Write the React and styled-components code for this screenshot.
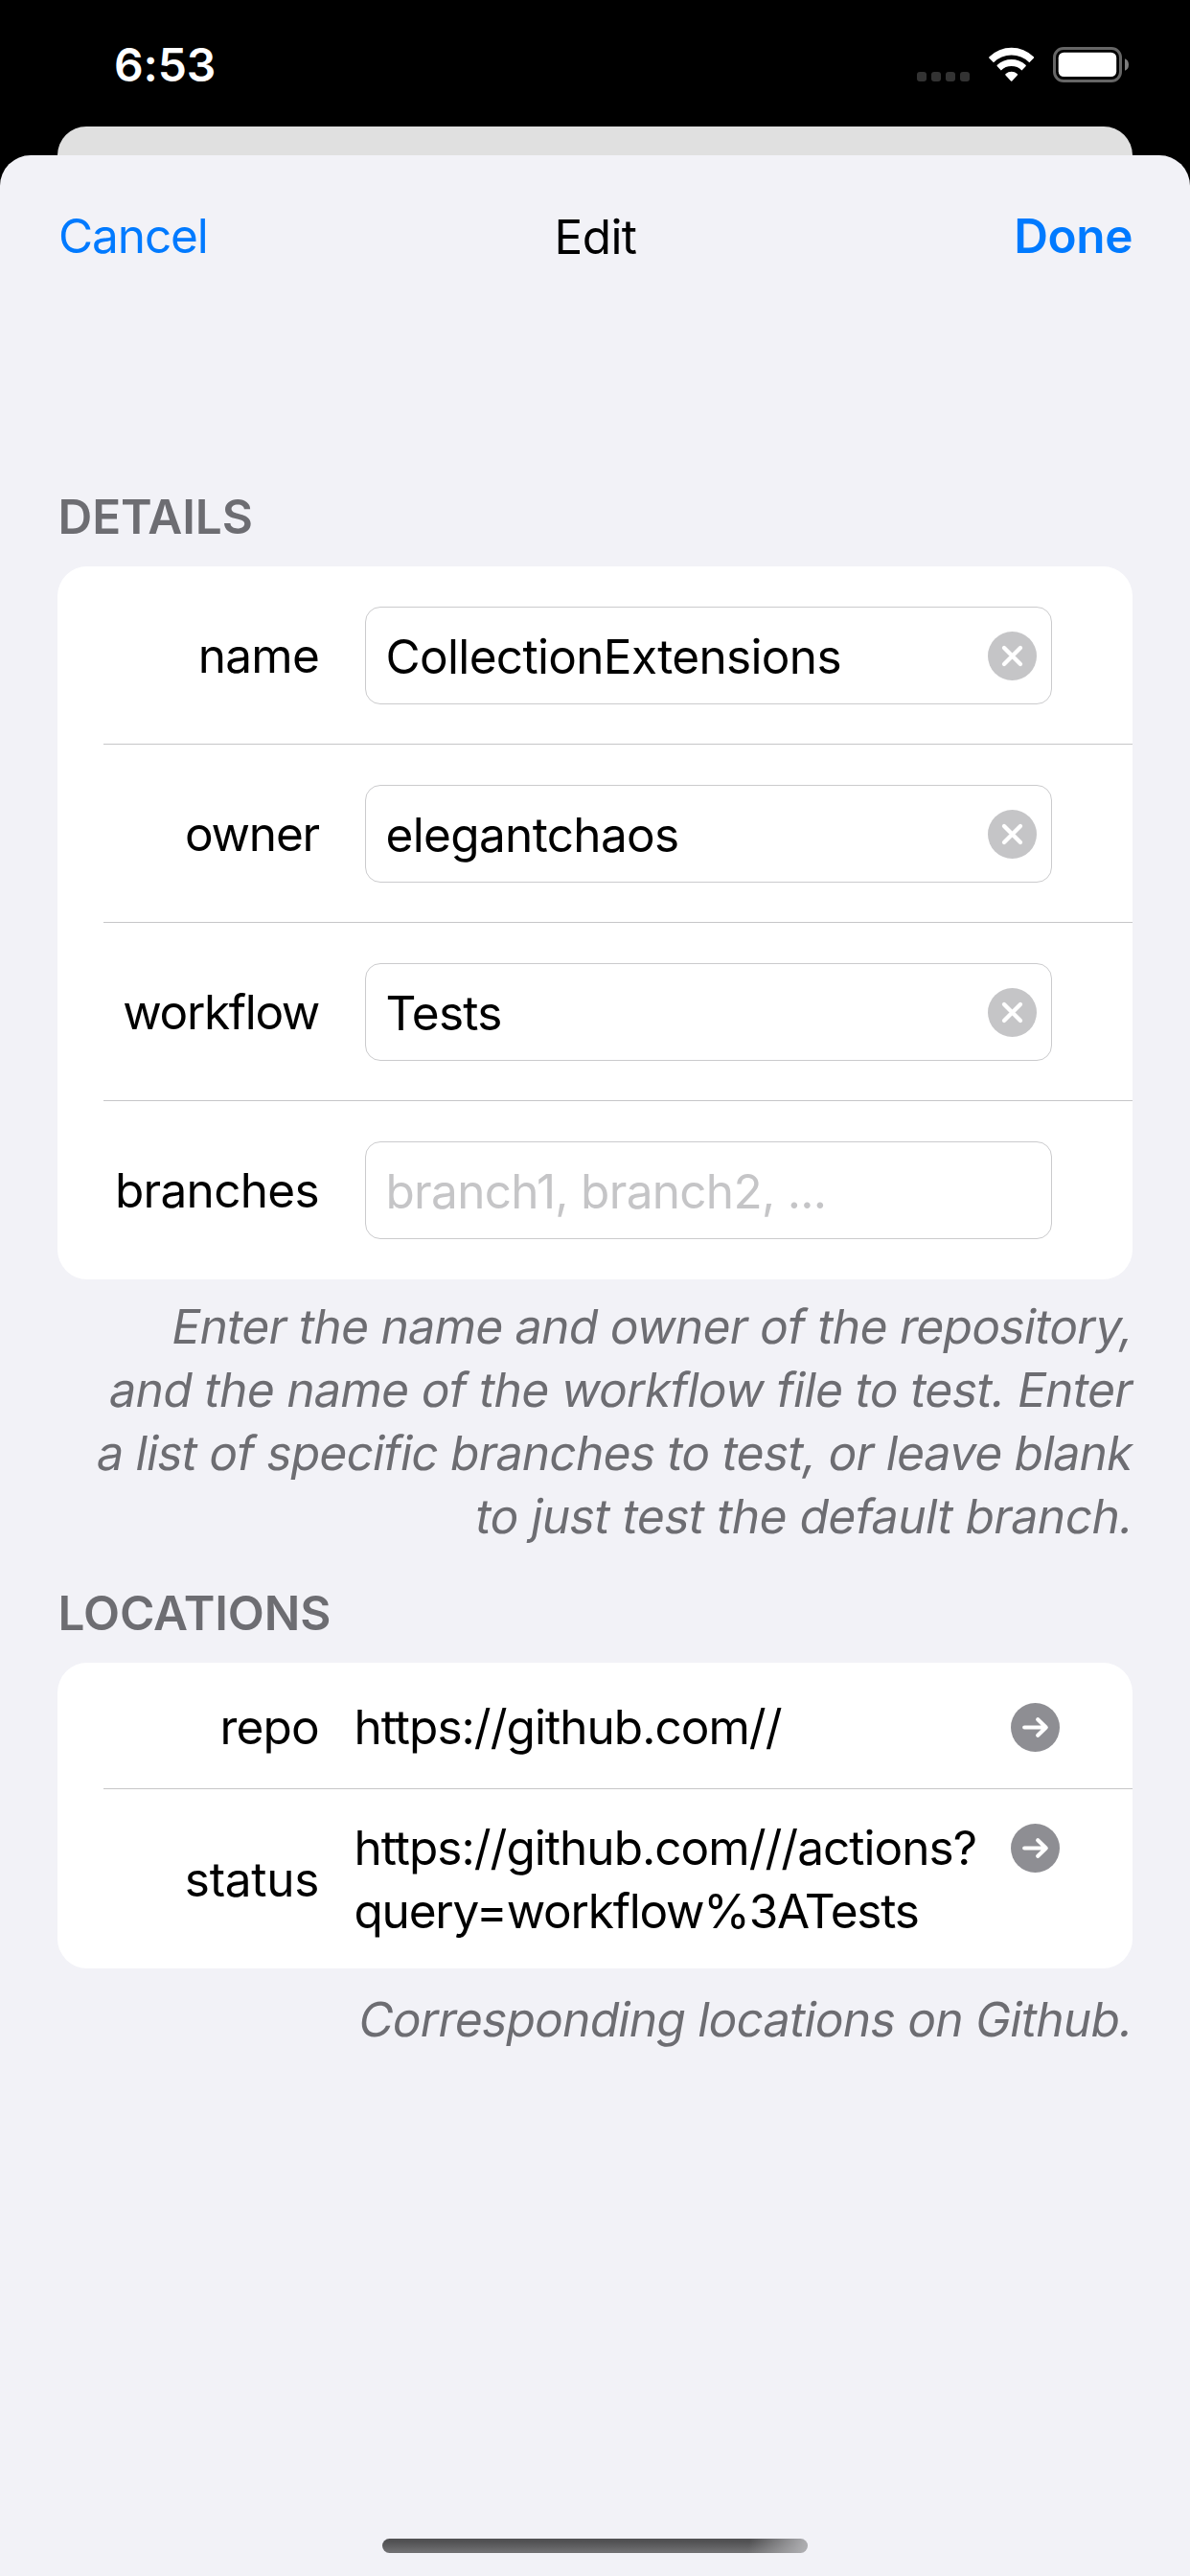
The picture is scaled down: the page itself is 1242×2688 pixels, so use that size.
import React from "react";
import styled, { createGlobalStyle } from "styled-components";

const GlobalStyle = createGlobalStyle`
  *, *::before, *::after { box-sizing: border-box; }
  body {
    margin: 0;
    background: #000;
    font-family: Inter, "Liberation Sans", sans-serif;
    font-size: 49.5px;
    line-height: 66px;
    color: #000;
  }
`;

const Screen = styled.div`
  display: flex;
  flex-direction: column;
  width: 1242px;
  height: 2688px;
  background: #000;
  overflow: hidden;
`;

const StatusBar = styled.header`
  display: flex;
  justify-content: space-between;
  height: 132px;
  padding: 0 64px 0 119px;
`;

const Clock = styled.time`
  padding-top: 38px;
  font-size: 48px;
  line-height: 60px;
  font-weight: 600;
  letter-spacing: -0.15px;
  color: #fff;
`;

const Indicators = styled.div`
  display: flex;
  align-items: flex-start;
  gap: 20px;
  padding-top: 49px;
`;

const SignalDots = styled.div`
  display: flex;
  gap: 5px;
  padding-top: 26px;
`;

const SignalDot = styled.i`
  width: 10px;
  height: 10px;
  border-radius: 3px;
  background: #333;
`;

const Glyph = styled.svg`
  display: block;
  flex: none;
`;

const BackCard = styled.div`
  height: 30px;
  margin: 0 60px;
  border-radius: 31px 31px 0 0;
  background: #e0e0e0;
`;

const Sheet = styled.main`
  display: flex;
  flex-direction: column;
  flex: 1;
  border-radius: 32px 32px 0 0;
  background: #f2f2f7;
`;

const NavBar = styled.nav`
  display: grid;
  grid-template-columns: 1fr auto 1fr;
  height: 168px;
  padding: 51px 60px 0 61px;
`;

const NavButton = styled.button`
  justify-self: ${(p) => (p.$primary ? "end" : "start")};
  height: 66px;
  padding: 0;
  border: 0;
  background: none;
  font: inherit;
  font-weight: ${(p) => (p.$primary ? 600 : 400)};
  letter-spacing: ${(p) => (p.$primary ? -0.43 : -1.1)}px;
  color: #007aff;
`;

const NavTitle = styled.h1`
  margin: 0;
  padding-top: 1px;
  font-size: inherit;
  font-weight: 400;
  letter-spacing: -0.6px;
`;

const Form = styled.div`
  flex: 1;
  padding: 176px 60px 0;
`;

const SectionTitle = styled.h2`
  margin: 0 0 19px;
  padding-left: 0.5px;
  font-size: inherit;
  font-weight: 600;
  letter-spacing: -0.1px;
  color: #6d6d72;
`;

const Card = styled.section`
  padding-left: 48px;
  border-radius: 31px;
  background: #fff;
`;

const Row = styled.div`
  display: flex;
  align-items: flex-start;
  height: ${(p) => p.$height}px;
  padding-top: ${(p) => p.$inset}px;
  border-bottom: 1px solid #c6c6c8;

  &:last-child { border-bottom: 0; }
`;

const Label = styled.label`
  display: flex;
  align-items: center;
  justify-content: flex-end;
  width: 225px;
  height: ${(p) => p.$height}px;
  letter-spacing: ${(p) => p.$tracking}px;
`;

const Field = styled.div`
  display: flex;
  align-items: center;
  justify-content: space-between;
  width: 717px;
  height: 102px;
  margin-left: 48px;
  padding: 0 15px 0 20.5px;
  border: 1px solid #cbcbcd;
  border-radius: 16px;
`;

const FieldText = styled.span`
  padding-top: 2px;
  white-space: nowrap;
  letter-spacing: ${(p) => p.$tracking}px;
  color: ${(p) => (p.$placeholder ? "#c5c5c7" : "#000")};
`;

const Address = styled.div`
  width: 685.5px;
  margin-left: 36.5px;
`;

const Line = styled.div`
  white-space: nowrap;
  letter-spacing: ${(p) => p.$tracking}px;
`;

const OpenButton = styled.span`
  padding-top: 8px;
`;

/* The roman face slanted about its baseline keeps the two-storey "a" and the short "f". */
const Footnote = styled.div`
  display: flex;
  flex-direction: column;
  align-items: flex-end;
  padding: ${(p) => p.$inset}px 2.5px 0 0;
  margin-bottom: 35px;
  color: #6d6d72;

  ${Line} {
    transform: skewX(-10deg);
    transform-origin: 0 51px;
  }
`;

const HomeIndicator = styled.div`
  width: 444px;
  height: 15px;
  margin: 0 0 24px 399px;
  border-radius: 7.5px;
  background:
    linear-gradient(98deg, rgba(180, 180, 183, 0) 86%, rgba(180, 180, 183, 0.9) 99%),
    linear-gradient(#515153 20%, #6f6f71 90%);
`;

const WifiIcon = () => (
  <Glyph width="47.33" height="36" viewBox="0 0 142 108" fill="#fff">
    <path d="M1.6 35.2 Q-1 32.8 1.6 30.4 A99 99 0 0 1 140.4 30.4 Q143 32.8 140.4 35.2 L127 48.5 A80 80 0 0 0 15 48.5 Z" />
    <path d="M26.5 61 Q24 58.8 26.5 56.6 A66 66 0 0 1 115.5 56.6 Q118 58.8 115.5 61 L103.5 73.5 A46 46 0 0 0 38.5 73.5 Z" />
    <path d="M52.5 88.5 Q50.5 86 53 84 A27 27 0 0 1 89 84 Q91.5 86 89.5 88.5 L73 106.5 Q71 108.5 69 106.5 Z" />
  </Glyph>
);

const BatteryIcon = () => (
  <Glyph width="79" height="37" viewBox="0 0 79 37">
    <rect x="1.5" y="1.5" width="69" height="34" rx="9.5" fill="none" stroke="#666" strokeWidth="3" />
    <rect x="5.7" y="5.7" width="60.5" height="25.3" rx="5.5" fill="#fff" />
    <path d="M75 12.2 Q79 13.8 79 18.5 Q79 23.2 75 24.8 Z" fill="#7d7d7d" />
  </Glyph>
);

const ClearIcon = () => (
  <Glyph width="51" height="51" viewBox="0 0 51 51">
    <circle cx="25.5" cy="25.5" r="25.5" fill="#c5c5c7" />
    <path d="M17 17 L34 34 M34 17 L17 34" stroke="#fff" strokeWidth="4.3" strokeLinecap="round" />
  </Glyph>
);

const ArrowIcon = () => (
  <Glyph width="51" height="51" viewBox="0 0 51 51">
    <circle cx="25.5" cy="25.5" r="25.5" fill="#8e8e93" />
    <path
      d="M14.2 25.5 H36.5 M28.2 17.2 L36.7 25.5 L28.2 33.8"
      fill="none"
      stroke="#fff"
      strokeWidth="4.2"
      strokeLinecap="round"
      strokeLinejoin="round"
    />
  </Glyph>
);

const fields = [
  { label: "name", labelTracking: -0.75, value: "CollectionExtensions", tracking: -0.67 },
  { label: "owner", labelTracking: -1.2, value: "elegantchaos", tracking: -0.66 },
  { label: "workflow", labelTracking: -1.35, value: "Tests", tracking: -0.75 },
  { label: "branches", labelTracking: -0.68, placeholder: "branch1, branch2, ...", tracking: -0.7 },
];

const locations = [
  { label: "repo", labelTracking: -0.8, height: 132, inset: 34, lines: [["https://github.com//", -0.97]] },
  {
    label: "status",
    labelTracking: -0.3,
    height: 187,
    inset: 28,
    lines: [["https://github.com///actions?", -0.98], ["query=workflow%3ATests", -1.22]],
  },
];

const detailsNote = [
  ["Enter the name and owner of the repository,", -0.6],
  ["and the name of the workflow file to test. Enter", -0.56],
  ["a list of specific branches to test, or leave blank", -0.69],
  ["to just test the default branch.", -0.45],
];

const locationsNote = [["Corresponding locations on Github.", -0.65]];

const Lines = ({ items }) =>
  items.map(([text, tracking]) => (
    <Line key={text} $tracking={tracking}>
      {text}
    </Line>
  ));

export default function App() {
  return (
    <>
      <GlobalStyle />
      <Screen>
        <StatusBar>
          <Clock>6:53</Clock>
          <Indicators>
            <SignalDots>
              {[0, 1, 2, 3].map((n) => (
                <SignalDot key={n} />
              ))}
            </SignalDots>
            <WifiIcon />
            <BatteryIcon />
          </Indicators>
        </StatusBar>
        <BackCard />
        <Sheet>
          <NavBar>
            <NavButton>Cancel</NavButton>
            <NavTitle>Edit</NavTitle>
            <NavButton $primary>Done</NavButton>
          </NavBar>
          <Form>
            <SectionTitle>DETAILS</SectionTitle>
            <Card>
              {fields.map((f) => (
                <Row key={f.label} $height={186} $inset={42}>
                  <Label $height={102} $tracking={f.labelTracking}>
                    {f.label}
                  </Label>
                  <Field>
                    <FieldText $tracking={f.tracking} $placeholder={!f.value}>
                      {f.value || f.placeholder}
                    </FieldText>
                    {f.value && <ClearIcon />}
                  </Field>
                </Row>
              ))}
            </Card>
            <Footnote $inset={16}>
              <Lines items={detailsNote} />
            </Footnote>
            <SectionTitle>LOCATIONS</SectionTitle>
            <Card>
              {locations.map((l) => (
                <Row key={l.label} $height={l.height} $inset={l.inset}>
                  <Label $height={66 * l.lines.length} $tracking={l.labelTracking}>
                    {l.label}
                  </Label>
                  <Address>
                    <Lines items={l.lines} />
                  </Address>
                  <OpenButton>
                    <ArrowIcon />
                  </OpenButton>
                </Row>
              ))}
            </Card>
            <Footnote $inset={20}>
              <Lines items={locationsNote} />
            </Footnote>
          </Form>
          <HomeIndicator />
        </Sheet>
      </Screen>
    </>
  );
}
